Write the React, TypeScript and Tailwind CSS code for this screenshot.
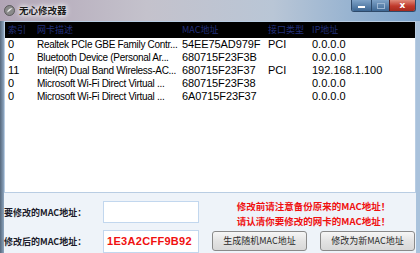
import React from "react";

const cjk = "font-['Noto_Sans_CJK_SC',sans-serif]";
const latin = "font-['Liberation_Sans','Noto_Sans_CJK_SC',sans-serif]";

const rows = [
  { idx: "0", desc: "Realtek PCIe GBE Family Contr...", mac: "54EE75AD979F", type: "PCI", ip: "0.0.0.0" },
  { idx: "0", desc: "Bluetooth Device (Personal Ar...", mac: "680715F23F3B", type: "", ip: "0.0.0.0" },
  { idx: "11", desc: "Intel(R) Dual Band Wireless-AC...", mac: "680715F23F37", type: "PCI", ip: "192.168.1.100" },
  { idx: "0", desc: "Microsoft Wi-Fi Direct Virtual ...", mac: "680715F23F38", type: "", ip: "0.0.0.0" },
  { idx: "0", desc: "Microsoft Wi-Fi Direct Virtual ...", mac: "6A0715F23F37", type: "", ip: "0.0.0.0" },
];

function AppIcon() {
  return (
    <svg width="11" height="11" viewBox="0 0 11 11">
      <circle cx="5.5" cy="5.5" r="5" fill="#8a8a8a" stroke="#4a4a4a" strokeWidth="0.8" />
      <path d="M3 7.5 C4 3.5 7 3 8.5 3.5 C7 4.5 6 6 3 7.5 Z" fill="#e8e8e8" />
    </svg>
  );
}

function TitleBar() {
  return (
    <div className="relative flex h-[21px] items-center bg-[linear-gradient(90deg,#b2a5b6_0%,#c4c2cc_35%,#b9c6d6_65%,#7aa3cc_100%)] pl-[4px]">
      <AppIcon />
      <span
        className={`ml-[4px] text-[9.5px] font-bold text-[#1b1b1b] ${cjk} [text-shadow:0_0_4px_#ffffff,0_0_6px_#ffffff]`}
      >
        无心修改器
      </span>
      {/* caption buttons */}
      <div className="absolute right-[4px] top-0 flex h-[12px] overflow-hidden rounded-b-[3px] border border-t-0 border-[#2e4a6a]">
        <div className="flex w-[19px] items-center justify-center bg-[linear-gradient(180deg,#7fa3c8,#3d6793)]">
          <div className="mt-[3px] h-[2px] w-[7px] bg-white" />
        </div>
        <div className="flex w-[18px] items-center justify-center border-l border-[#2e4a6a] bg-[linear-gradient(180deg,#7fa3c8,#3d6793)]">
          <div className="h-[6px] w-[8px] border border-[#9cb6d2]" />
        </div>
        <div className="flex w-[26px] items-center justify-center border-l border-[#5a1f1f] bg-[linear-gradient(180deg,#e08a7a,#c0392b_55%,#a52a1e)]">
          <span className="font-['DejaVu_Sans',sans-serif] text-[9px] font-bold leading-none text-white">x</span>
        </div>
      </div>
    </div>
  );
}

function ListView() {
  return (
    <div className="h-[172px] border border-[#b9cde3] bg-white">
      <div className={`flex h-[16px] items-center bg-black text-[9px] text-[#24307c] ${cjk}`}>
        <div className="w-[28px] pl-[3px]">索引</div>
        <div className="w-[145px] pl-[4px]">网卡描述</div>
        <div className="w-[86px] pl-[4px]">MAC地址</div>
        <div className="w-[44px] pl-[4px]">接口类型</div>
        <div className="flex-1 pl-[4px]">IP地址</div>
      </div>
      {rows.map((r, i) => (
        <div key={i} className={`flex h-[13px] items-center text-[11px] leading-none text-black ${latin}`}>
          <div className="w-[28px] pl-[3px]">{r.idx}</div>
          <div className="w-[145px] whitespace-nowrap pl-[4px] text-[10px] tracking-[-0.3px]">{r.desc}</div>
          <div className="w-[86px] pl-[4px] tracking-[-0.1px]">{r.mac}</div>
          <div className="w-[44px] pl-[4px]">{r.type}</div>
          <div className="flex-1 pl-[4px]">{r.ip}</div>
        </div>
      ))}
    </div>
  );
}

function Button({ text }: { text: string }) {
  return (
    <button
      className={`flex h-[20px] w-[95px] items-center justify-center rounded-[3px] border border-[#8a8a8a] bg-[linear-gradient(180deg,#f6f6f6,#e3e3e3_50%,#d8d8d8)] text-[9px] text-[#2a2a2a] ${cjk}`}
    >
      {text}
    </button>
  );
}

export default function App() {
  return (
    <div className="h-[253px] w-[420px] overflow-hidden bg-[#a7bfd8]">
      <TitleBar />
      <div className="flex h-[232px]">
        <div className="w-[4px] bg-[linear-gradient(90deg,#56687c,#8ea6c0)]" />
        <div className="flex-1 bg-[#eef3f9]">
          <ListView />
          {/* edit area */}
          <div className="mt-[8px] flex h-[22px] items-start">
            <div className={`w-[99px] pt-[5px] text-[9px] font-bold text-[#1b1b2b] ${cjk}`}>要修改的MAC地址：</div>
            <div className="h-[22px] w-[96px] border border-[#c2d7ee] bg-white" />
            <div className={`-mt-[2px] flex flex-1 flex-col items-center pl-[12px] text-[9.5px] font-bold leading-[15px] text-[#f01010] ${cjk}`}>
              <span>修改前请注意备份原来的MAC地址！</span>
              <span>请认清你要修改的网卡的MAC地址！</span>
            </div>
          </div>
          <div className="mt-[7px] flex items-start">
            <div className={`w-[99px] pt-[5px] text-[9px] font-bold text-[#1b1b2b] ${cjk}`}>修改后的MAC地址：</div>
            <div className="flex h-[23px] w-[96px] items-center border border-[#c2d7ee] bg-white pl-[3px]">
              <span className={`text-[11px] font-bold tracking-[0.3px] text-[#f01010] ${latin}`}>1E3A2CFF9B92</span>
            </div>
            <div className="ml-[13px] mt-[1px] flex gap-[13px]">
              <Button text="生成随机MAC地址" />
              <Button text="修改为新MAC地址" />
            </div>
          </div>
        </div>
        <div className="w-[4px] bg-[#a9c2dc]" />
      </div>
    </div>
  );
}
